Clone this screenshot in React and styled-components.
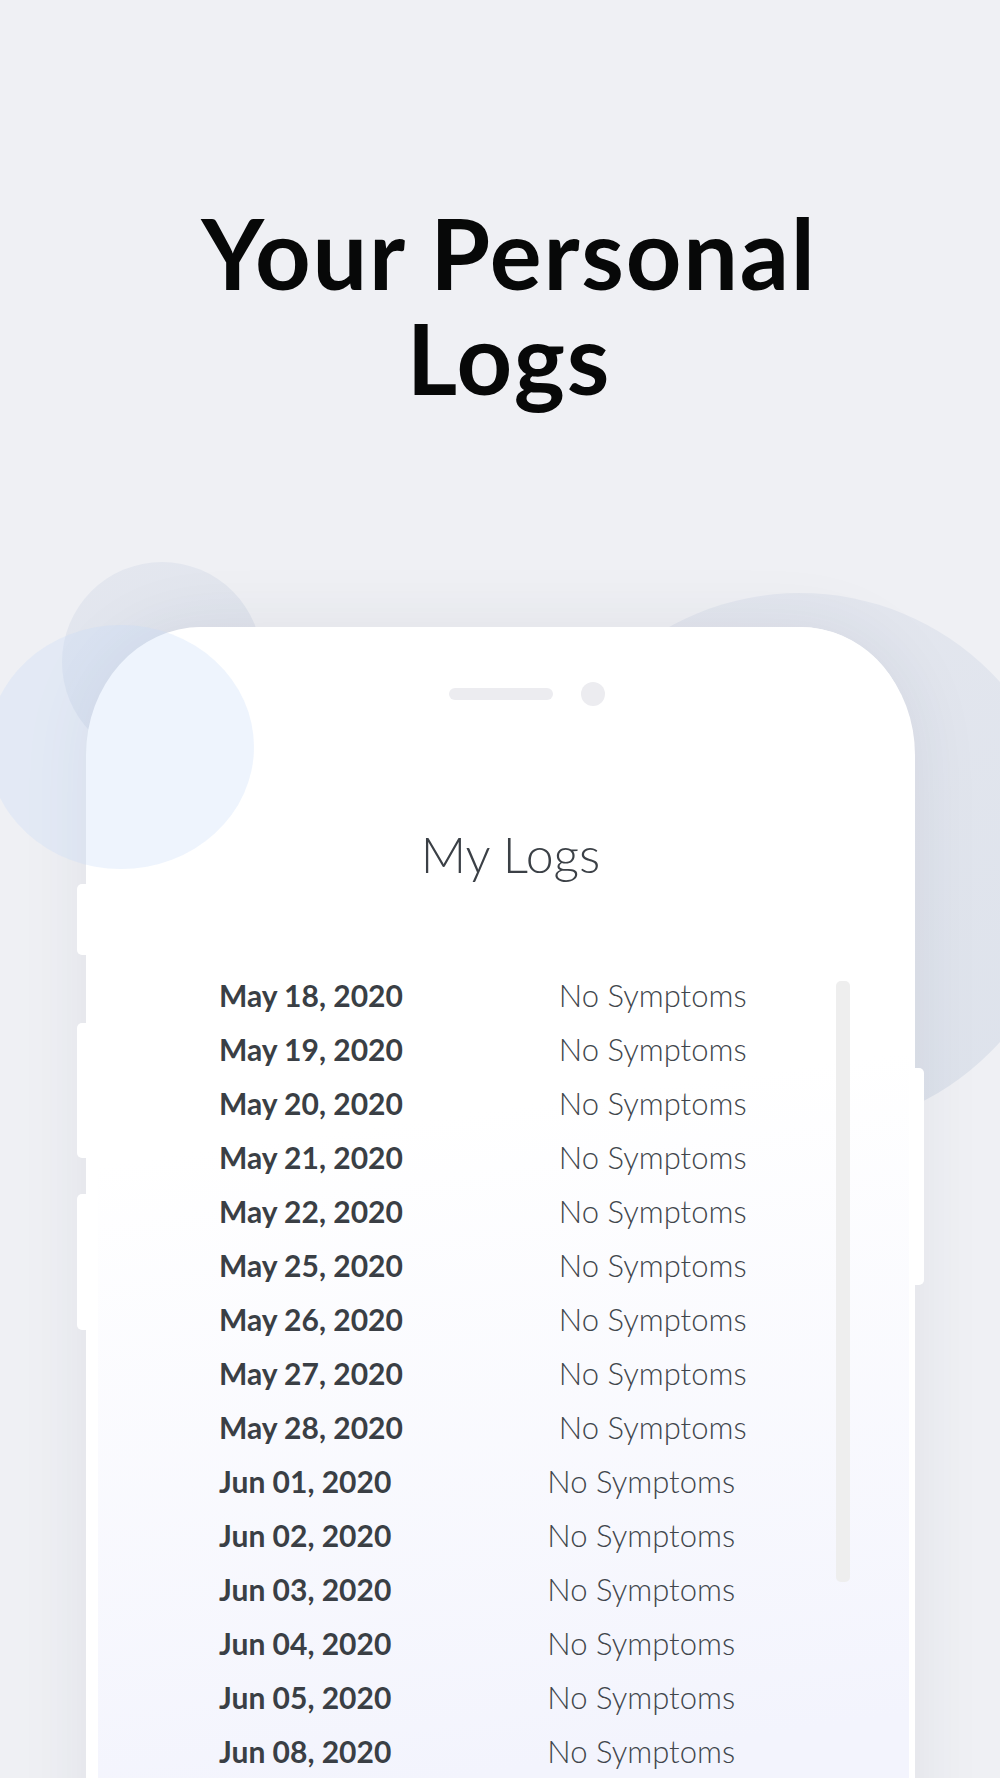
import React from 'react'
import styled, { createGlobalStyle } from 'styled-components'

const logs = [
  'May 18, 2020',
  'May 19, 2020',
  'May 20, 2020',
  'May 21, 2020',
  'May 22, 2020',
  'May 25, 2020',
  'May 26, 2020',
  'May 27, 2020',
  'May 28, 2020',
  'Jun 01, 2020',
  'Jun 02, 2020',
  'Jun 03, 2020',
  'Jun 04, 2020',
  'Jun 05, 2020',
  'Jun 08, 2020',
]

// left side buttons: [top, height] relative to phone top
const leftKeys = [
  [257, 71],
  [396, 135],
  [567, 136],
]

function App() {
  return (
    <Page>
      <GlobalStyle />
      <Blob $left={62} $top={562} $w={200} $h={200} />
      <Blob $left={531} $top={593} $w={538} $h={538} />
      <BlueBlob />

      <Heading>
        Your Personal
        <br />
        Logs
      </Heading>

      <Phone>
        {leftKeys.map(([top, h]) => (
          <SideKey key={top} $top={top} $h={h} />
        ))}
        <SideKey $right $top={441} $h={217} />

        <Screen>
          <Notch>
            <Speaker>
              <Camera />
            </Speaker>
          </Notch>

          <ScreenTitle>My Logs</ScreenTitle>

          <ListArea>
            <Rows>
              {logs.map((d) => (
                <Row key={d}>
                  <DateText>{d}</DateText>
                  <Status>No Symptoms</Status>
                </Row>
              ))}
            </Rows>
            <ScrollTrack />
          </ListArea>
        </Screen>
      </Phone>
    </Page>
  )
}

export default App

const GlobalStyle = createGlobalStyle`
  html, body {
    margin: 0;
    padding: 0;
    background: #eff0f4;
  }
  body {
    font-family: Lato, "Open Sans", sans-serif;
  }
`

const Page = styled.div`
  position: relative;
  width: 1000px;
  height: 1778px;
  overflow: hidden;
  background: #eff0f4;
  padding-top: 200px;
  box-sizing: border-box;
`

const Blob = styled.div`
  position: absolute;
  left: ${(p) => p.$left}px;
  top: ${(p) => p.$top}px;
  width: ${(p) => p.$w}px;
  height: ${(p) => p.$h}px;
  border-radius: 50%;
  background: linear-gradient(160deg, #e4e7ef 0%, #dde2eb 100%);
  z-index: 0;
`

const BlueBlob = styled.div`
  position: absolute;
  left: -12px;
  top: 625px;
  width: 266px;
  height: 244px;
  border-radius: 50%;
  background: rgba(200, 219, 250, 0.3);
  z-index: 3;
`

const Heading = styled.h1`
  position: relative;
  z-index: 1;
  margin: 0;
  padding-left: 18px;
  text-align: center;
  font-family: Lato, sans-serif;
  font-weight: 700;
  font-size: 97px;
  line-height: 105px;
  letter-spacing: 1.8px;
  color: #070808;
`

const Phone = styled.div`
  position: relative;
  z-index: 2;
  margin: 217px 0 0 86px;
  width: 829px;
  height: 1300px;
  background: #fff;
  border-radius: 115px 115px 0 0 / 128px 128px 0 0;
  box-shadow: 0 0 70px rgba(40, 50, 80, 0.08);
  display: flex;
`

const SideKey = styled.div`
  position: absolute;
  top: ${(p) => p.$top}px;
  height: ${(p) => p.$h}px;
  ${(p) => (p.$right ? 'left: 100%;' : 'right: 100%;')}
  width: 9px;
  background: #fff;
  border-radius: ${(p) => (p.$right ? '0 5px 5px 0' : '5px 0 0 5px')};
`

const Screen = styled.div`
  flex: 1;
  margin: 0 6px 0 12px;
  padding-top: 61px;
  border-radius: 110px 110px 0 0;
  background: linear-gradient(172deg, #ffffff 0%, #ffffff 38%, #f3f4fd 85%);
  display: flex;
  flex-direction: column;
`

const Notch = styled.div`
  display: flex;
  justify-content: center;
  padding-right: 6px;
`

const Speaker = styled.div`
  position: relative;
  width: 104px;
  height: 12px;
  border-radius: 6px;
  background: #ececf0;
`

const Camera = styled.div`
  position: absolute;
  left: calc(100% + 28px);
  top: -6px;
  width: 24px;
  height: 24px;
  border-radius: 50%;
  background: #ececf0;
`

const ScreenTitle = styled.h2`
  margin: 126px 0 0;
  text-align: center;
  padding-left: 14px;
  font-family: Lato, sans-serif;
  font-weight: 300;
  font-size: 50px;
  line-height: 56px;
  color: #3b4046;
`

const ListArea = styled.div`
  display: flex;
  margin-top: 86px;
  padding-left: 121px;
`

const Rows = styled.div`
  display: flex;
  flex-direction: column;
`

const Row = styled.div`
  display: flex;
  align-items: baseline;
  gap: 156px;
  height: 54px;
  line-height: 54px;
  font-family: Lato, sans-serif;
  font-size: 30px;
  color: #3a3f45;
  white-space: nowrap;
`

const DateText = styled.span`
  font-weight: 700;
`

const Status = styled.span`
  font-weight: 300;
  font-size: 31px;
  color: #41464c;
`

const ScrollTrack = styled.div`
  margin: 13px 59px 0 auto;
  width: 14px;
  height: 601px;
  border-radius: 5px;
  background: #eeeeee;
`
